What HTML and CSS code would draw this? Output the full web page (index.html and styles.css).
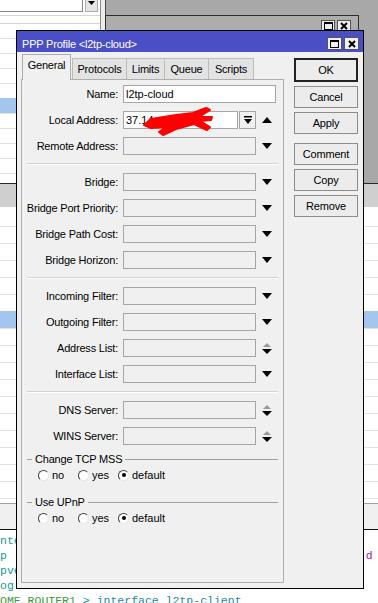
FILE: index.html
```html
<!DOCTYPE html>
<html>
<head>
	<title>PPP Profile &lt;l2tp-cloud&gt;</title>
	<link rel="stylesheet" href="styles.css">
</head>
<body>
	<!-- windows behind the dialog -->
	<div class="win win-a">
		<div class="a-body">
			<div class="combo">
				<span class="combo-box"></span>
				<span class="combo-btn"><svg width="7" height="4"><polygon points="0,0 7,0 3.5,4"/></svg></span>
			</div>
			<div class="list list-a"><div class="sel sel-a"></div></div>
		</div>
	</div>

	<div class="win win-b">
		<div class="b-btns">
			<span class="wbtn"><svg width="9" height="8"><rect x="0.5" y="0.5" width="8" height="7" fill="none" stroke="#000"/><rect x="0" y="0" width="9" height="2"/></svg></span>
			<span class="wbtn"><svg width="8" height="8"><path d="M1 1 L7 7 M7 1 L1 7" stroke="#000" stroke-width="2"/></svg></span>
		</div>
	</div>

	<div class="win win-c">
		<div class="c-head"></div>
		<div class="list list-c"><div class="sel sel-c"></div></div>
		<div class="status"></div>
	</div>

	<div class="console">
		<div class="ln t-teal">nte</div>
		<div class="ln"><span class="t-teal">p</span>                                                    <span class="t-purple">d</span></div>
		<div class="ln t-teal">pvé</div>
		<div class="ln t-teal">og</div>
		<div class="ln"><span class="t-green">OME ROUTER1</span> <span class="t-blue">&gt; interface l2tp-client</span></div>
	</div>

	<!-- the PPP profile dialog -->
	<div class="dialog">
		<div class="titlebar">
			<span class="title">PPP Profile &lt;l2tp-cloud&gt;</span>
			<span class="tb-btns">
				<span class="tb-btn"><svg width="9" height="8"><rect x="0.5" y="0.5" width="8" height="7" fill="none" stroke="#000"/><rect x="0" y="0" width="9" height="2"/></svg></span>
				<span class="tb-btn"><svg width="8" height="8"><path d="M1 1 L7 7 M7 1 L1 7" stroke="#000" stroke-width="2"/></svg></span>
			</span>
		</div>

		<div class="dlg-body">
			<div class="tabcol">
				<div class="tabs">
					<span class="tab on t-general">General</span>
					<span class="tab t-protocols">Protocols</span>
					<span class="tab t-limits">Limits</span>
					<span class="tab t-queue">Queue</span>
					<span class="tab t-scripts">Scripts</span>
				</div>

				<div class="panel">
					<div class="row">
						<span class="lbl">Name:</span>
						<span class="inp wide white">l2tp-cloud</span>
					</div>
					<div class="row">
						<span class="lbl">Local Address:</span>
						<span class="inp short white">37.14
							<svg class="scribble" width="74" height="32" viewBox="0 0 74 32">
								<polygon points="2,19 9,13 34,9 51,7 64,2 68,4 57,11 70,11 69,14 58,15 68,21 65,24 52,18 34,23 21,29 17,26 24,21 9,22" fill="#f00" stroke="#f00" stroke-width="2" stroke-linejoin="round"/>
							</svg>
						</span>
						<span class="sbtn"><svg width="8" height="9"><rect x="0" y="0" width="8" height="1.5"/><polygon points="0,3 8,3 4,8"/></svg></span>
						<span class="arr"><svg width="10" height="6"><polygon points="0,6 10,6 5,0"/></svg></span>
					</div>
					<div class="row">
						<span class="lbl">Remote Address:</span>
						<span class="inp"></span>
						<span class="arr"><svg width="10" height="6"><polygon points="0,0 10,0 5,6"/></svg></span>
					</div>

					<div class="sep"></div>

					<div class="row">
						<span class="lbl">Bridge:</span>
						<span class="inp"></span>
						<span class="arr"><svg width="10" height="6"><polygon points="0,0 10,0 5,6"/></svg></span>
					</div>
					<div class="row">
						<span class="lbl">Bridge Port Priority:</span>
						<span class="inp"></span>
						<span class="arr"><svg width="10" height="6"><polygon points="0,0 10,0 5,6"/></svg></span>
					</div>
					<div class="row">
						<span class="lbl">Bridge Path Cost:</span>
						<span class="inp"></span>
						<span class="arr"><svg width="10" height="6"><polygon points="0,0 10,0 5,6"/></svg></span>
					</div>
					<div class="row">
						<span class="lbl">Bridge Horizon:</span>
						<span class="inp"></span>
						<span class="arr"><svg width="10" height="6"><polygon points="0,0 10,0 5,6"/></svg></span>
					</div>

					<div class="sep"></div>

					<div class="row">
						<span class="lbl">Incoming Filter:</span>
						<span class="inp"></span>
						<span class="arr"><svg width="10" height="6"><polygon points="0,0 10,0 5,6"/></svg></span>
					</div>
					<div class="row">
						<span class="lbl">Outgoing Filter:</span>
						<span class="inp"></span>
						<span class="arr"><svg width="10" height="6"><polygon points="0,0 10,0 5,6"/></svg></span>
					</div>
					<div class="row">
						<span class="lbl">Address List:</span>
						<span class="inp"></span>
						<span class="arr"><svg width="10" height="12"><polygon points="1,5 9,5 5,1" fill="#999"/><polygon points="0,7 10,7 5,12"/></svg></span>
					</div>
					<div class="row">
						<span class="lbl">Interface List:</span>
						<span class="inp"></span>
						<span class="arr"><svg width="10" height="6"><polygon points="0,0 10,0 5,6"/></svg></span>
					</div>

					<div class="sep"></div>

					<div class="row">
						<span class="lbl">DNS Server:</span>
						<span class="inp"></span>
						<span class="arr"><svg width="10" height="12"><polygon points="1,5 9,5 5,1" fill="#999"/><polygon points="0,7 10,7 5,12"/></svg></span>
					</div>
					<div class="row">
						<span class="lbl">WINS Server:</span>
						<span class="inp"></span>
						<span class="arr"><svg width="10" height="12"><polygon points="1,5 9,5 5,1" fill="#999"/><polygon points="0,7 10,7 5,12"/></svg></span>
					</div>

					<div class="group">
						<div class="grp-head"><span>Change TCP MSS</span></div>
						<div class="radios">
							<span class="radio"><i class="rb"></i>no</span>
							<span class="radio"><i class="rb"></i>yes</span>
							<span class="radio"><i class="rb on"></i>default</span>
						</div>
					</div>

					<div class="group">
						<div class="grp-head"><span>Use UPnP</span></div>
						<div class="radios">
							<span class="radio"><i class="rb"></i>no</span>
							<span class="radio"><i class="rb"></i>yes</span>
							<span class="radio"><i class="rb on"></i>default</span>
						</div>
					</div>
				</div>
			</div>

			<div class="btncol">
				<button class="btn default">OK</button>
				<button class="btn">Cancel</button>
				<button class="btn">Apply</button>
				<button class="btn spaced">Comment</button>
				<button class="btn">Copy</button>
				<button class="btn">Remove</button>
			</div>
		</div>
	</div>
</body>
</html>
```

FILE: styles.css
```css
body {
	margin: 0;
	width: 378px;
	height: 603px;
	position: relative;
	overflow: hidden;
	background-color: #a8a8a8;
	font-family: "Liberation Sans", Arial, sans-serif;
	font-size: 11px;
	color: #000;
}

/* background windows */
.win {
	position: absolute;
	box-sizing: border-box;
}

.win-a {
	left: 0;
	top: 0;
	width: 106px;
	height: 183px;
	background-color: #ececec;
	border-right: 1px solid #4a4a4a;
}

.a-body {
	width: 101px;
	height: 183px;
	box-sizing: border-box;
	background-color: #fff;
	border-right: 1px solid #8a8a8a;
}

.combo {
	display: flex;
	height: 15px;
	border-bottom: 1px solid #d4d4d4;
}

.combo-box {
	width: 83px;
	height: 12px;
	box-sizing: border-box;
	border-right: 1px solid #8a8a8a;
	border-bottom: 1px solid #8a8a8a;
}

.combo-btn {
	width: 13px;
	height: 12px;
	margin-left: 2px;
	box-sizing: border-box;
	background-color: #e6e6e6;
	border: 1px solid #adadad;
	border-top: none;
	display: flex;
	justify-content: center;
	padding-top: 1px;
}

.list {
	position: relative;
	background: repeating-linear-gradient(to bottom, #fff 0 14px, #e2e2e2 14px 15px);
}

.list-a {
	margin-top: 7px;
	height: 160px;
	border-top: 1px solid #d4d4d4;
}

.sel {
	position: absolute;
	left: 0;
	right: 0;
	background-color: #a3c6ee;
}

.sel-a {
	top: 74px;
	height: 15px;
}

.win-b {
	left: 105px;
	top: 15px;
	width: 254px;
	height: 200px;
	border: 1px solid #2e2e2e;
	background-color: #adadad;
}

.b-btns {
	display: flex;
	justify-content: flex-end;
	gap: 2px;
	padding: 4px 7px 0 0;
}

.wbtn {
	width: 14px;
	height: 12px;
	box-sizing: border-box;
	background-color: #ececec;
	border: 1px solid #555;
	display: flex;
	align-items: center;
	justify-content: center;
}

.win-c {
	left: 0;
	top: 183px;
	width: 378px;
	height: 347px;
	border-top: 1px solid #2a2a2a;
	border-bottom: 1px solid #111;
	background-color: #fff;
}

.c-head {
	height: 23px;
	background-color: #cfcfcf;
}

.list-c {
	height: 296px;
	background: repeating-linear-gradient(to bottom, #fff 0 16px, #e2e2e2 16px 17px);
	background-position: 0 3px;
}

.sel-c {
	top: 104px;
	height: 17px;
}

.status {
	height: 25px;
	background-color: #f0f0f0;
	border-top: 1px solid #a0a0a0;
}

.console {
	position: absolute;
	left: 0;
	top: 530px;
	width: 378px;
	height: 73px;
	box-sizing: border-box;
	padding-top: 3px;
	background-color: #fff;
	font-family: "Liberation Mono", "Courier New", monospace;
	font-size: 11.5px;
	line-height: 15px;
	overflow: hidden;
}

.console .ln {
	height: 15px;
	white-space: pre;
}

.t-teal { color: #1a9898; }
.t-purple { color: #a020a0; }
.t-green { color: #3c9a3c; }
.t-blue { color: #2389a6; }

/* dialog */
.dialog {
	position: absolute;
	left: 16px;
	top: 30px;
	width: 348px;
	height: 559px;
	box-sizing: border-box;
	border: 1px solid #000;
	background-color: #f0f0f0;
	display: flex;
	flex-direction: column;
}

.titlebar {
	height: 21px;
	box-sizing: border-box;
	padding: 4px 4px 0 5px;
	background-color: #4b4fc6;
	color: #fff;
	display: flex;
	align-items: center;
	justify-content: space-between;
	letter-spacing: -0.2px;
}

.tb-btns {
	display: flex;
	gap: 2px;
}

.tb-btn {
	width: 15px;
	height: 13px;
	box-sizing: border-box;
	background-color: #f0f0f0;
	border: 1px solid #555;
	display: flex;
	align-items: center;
	justify-content: center;
}

.dlg-body {
	flex: 1;
	display: flex;
	gap: 10px;
	padding: 2px 5px 5px 4px;
}

.tabcol {
	width: 263px;
	display: flex;
	flex-direction: column;
}

.tabs {
	height: 25px;
	display: flex;
	align-items: flex-end;
	padding-left: 1px;
}

.tab {
	height: 21px;
	box-sizing: border-box;
	border: 1px solid #bcbcbc;
	border-bottom: none;
	background-color: #e3e3e3;
	display: flex;
	align-items: center;
	justify-content: center;
	margin-left: -1px;
	letter-spacing: -0.2px;
}

.tab.on {
	height: 26px;
	margin-left: 0;
	margin-right: 1px;
	margin-bottom: -1px;
	position: relative;
	z-index: 1;
	align-items: flex-start;
	padding-top: 4px;
	background-color: #f0f0f0;
	border-color: #adadad;
}

.t-general { width: 49px; }
.t-protocols { width: 55px; margin-left: 0; }
.t-limits { width: 39px; }
.t-queue { width: 45px; }
.t-scripts { width: 46px; }

.panel {
	flex: 1;
	border: 1px solid #adadad;
	padding-top: 5px;
	display: flex;
	flex-direction: column;
	gap: 8px;
}

.row {
	display: flex;
	align-items: center;
	height: 18px;
}

.lbl {
	width: 96px;
	margin-right: 5px;
	flex-shrink: 0;
	text-align: right;
	letter-spacing: -0.2px;
	white-space: nowrap;
}

.inp {
	position: relative;
	width: 133px;
	height: 18px;
	box-sizing: border-box;
	padding-left: 2px;
	line-height: 16px;
	border: 1px solid #a5a5a5;
	background-color: #f0f0f0;
}

.inp.white {
	background-color: #fff;
}

.inp.wide {
	width: 153px;
}

.inp.short {
	width: 115px;
}

.scribble {
	position: absolute;
	left: 18px;
	top: -6px;
}

.sbtn {
	width: 17px;
	height: 18px;
	margin-left: 1px;
	box-sizing: border-box;
	border: 1px solid #a5a5a5;
	background-color: #f0f0f0;
	display: flex;
	align-items: center;
	justify-content: center;
}

.arr {
	width: 21px;
	display: flex;
	align-items: center;
	justify-content: center;
}

.sep {
	height: 1px;
	margin: 0 5px;
	background-color: #d2d2d2;
	border-bottom: 1px solid #fff;
}

.group {
	padding-bottom: 7px;
}

.grp-head {
	display: flex;
	align-items: center;
	height: 12px;
	margin: 0 5px;
	letter-spacing: -0.2px;
}

.grp-head::before {
	content: "";
	width: 5px;
	height: 1px;
	background-color: #a0a0a0;
}

.grp-head::after {
	content: "";
	flex: 1;
	height: 1px;
	background-color: #a0a0a0;
}

.grp-head span {
	padding: 0 3px;
}

.radios {
	display: flex;
	align-items: center;
	height: 12px;
	margin-top: 4px;
	padding-left: 16px;
}

.radio {
	display: flex;
	align-items: center;
	width: 40px;
}

.rb {
	width: 11px;
	height: 11px;
	flex-shrink: 0;
	box-sizing: border-box;
	margin-right: 3px;
	border-radius: 50%;
	border: 1px solid;
	border-color: #404040 #e8e8e8 #e8e8e8 #404040;
	background-color: #fff;
	display: flex;
	align-items: center;
	justify-content: center;
}

.rb.on::after {
	content: "";
	width: 4px;
	height: 4px;
	border-radius: 50%;
	background-color: #000;
}

.btncol {
	width: 64px;
	margin-top: 4px;
	display: flex;
	flex-direction: column;
	gap: 4px;
}

.btn {
	height: 22px;
	padding: 0;
	box-sizing: border-box;
	border: 1px solid #8c8c8c;
	background-color: #ececec;
	font-family: "Liberation Sans", Arial, sans-serif;
	font-size: 11px;
	color: #000;
	letter-spacing: -0.2px;
}

.btn.default {
	height: 24px;
	border: 2px solid #222;
}

.btn.spaced {
	margin-top: 5px;
}
```
